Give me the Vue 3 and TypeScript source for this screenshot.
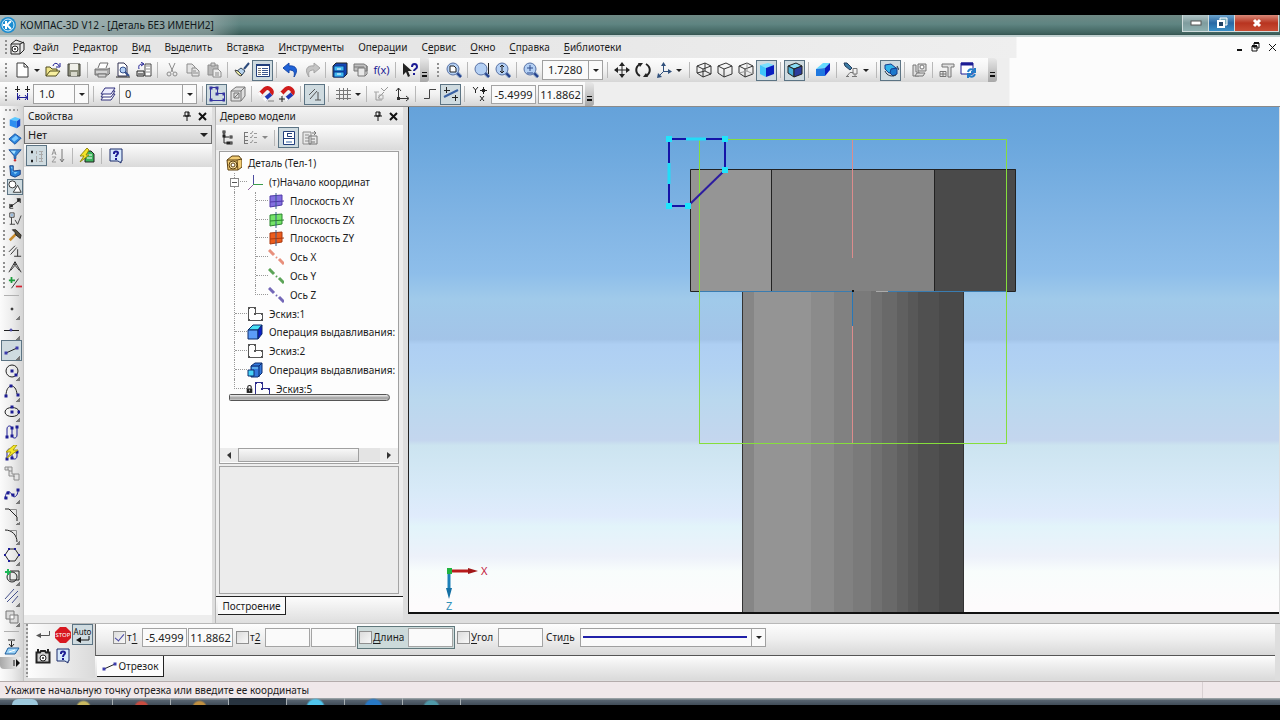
<script setup lang="ts">
import { h, ref } from 'vue'

type Shape = [d: string, fill: string, stroke?: string, width?: number]

const K = '#222'
const N = '#1c1c94'
const B = '#1f78e0'
const C = '#3fc4fa'
const D = '#0a1fc0'
const G = '#8c8c8c'
const L = '#d4d4d4'
const W = '#ffffff'
const _ = 'none'

const dots = (pts: number[][], s = 3): string =>
  pts.map(([x, y]) => `M${x - s / 2} ${y - s / 2}h${s}v${s}h${-s}z`).join('')
const ring = (x: number, y: number, r: number): string =>
  `M${x - r} ${y}a${r} ${r} 0 1 0 ${2 * r} 0a${r} ${r} 0 1 0 ${-2 * r} 0z`

const lens: Shape[] = [
  ['M11 11L15 15', _, '#8fa8c8', 4],
  ['M11 11L15 15', _, '#24408c', 2],
  [ring(7, 7, 6), '#b4d0f4', '#5670a4', 1],
]
const sketch = (c: string, s: number): Shape[] => [
  ['M1.5 1.5H8.500V7.500H15.500V14.500H1.500z', _, c, 1],
  [dots([[2, 2], [8, 2], [8, 8], [15, 8], [15, 14], [2, 14]], s), c],
]
const cubeWire: Shape = ['M1 4L9 1L15 4V12L7 15L1 11zM1 4L7 7L15 4M7 7V15', _, '#333', 1]
const magnet: Shape[] = [
  ['M2 8L7 3C10 0 16 5 13 8', _, '#d01c1c', 4],
  ['M13 8L7 13', _, '#2038b4', 4],
  ['M1 9L3 7M6 14L8 12', _, '#fafafa', 4],
]
const plane = (c: string, e: string): Shape[] => [
  ['M2 3L14 2V12L2 14z', c, e, 1],
  ['M8 0V16', _, '#345a8a', 1],
  ['M2 9L16 8', _, e, 1],
]
const axis = (c: string): Shape[] => [
  ['M1 1L6 6M11 10L16 15', _, c, 3],
  ['M8 8L9 9', _, c, 2],
]
const helpBox: Shape[] = [
  ['M2 1H14V13H13V15L10 13H2z', '#d6e8fb', '#1a2a6a', 1],
  ['M6 6V5C6 3 10 3 10 5C10 7 8 6 8 9', _, N, 2],
  ['M7 10H9V12H7z', N],
]

const icons: Record<string, Shape[]> = {
  detail: [['M2 5L7 1L15 4V11L11 15H2z', '#e8e8e8', K, 1], ['M2 5H11V15M11 5L15 3', _, K, 1], [ring(6, 10, 3), W, K, 1], [ring(6, 10, 1), K]],
  fresh: [['M3 1H10L14 5V15H3z', W, '#3c3c3c', 1], ['M10 1V5H14', _, '#3c3c3c', 1]],
  open: [['M1 14V5H5L7 7H12V9', '#efe58a', '#4f4a1c', 1], ['M1 14L5 9H15L11 14z', '#f8f0a0', '#4f4a1c', 1], ['M8 4C9 0 13 1 14 4M15 1V5H11', _, N, 1]],
  save: [['M2 2H14V14H2z', '#8c8e7c', '#404038', 1], ['M4 2H12V8H4z', '#f0f0ea'], ['M5 10H11V14H5z', '#d8d8cc']],
  print: [['M4 6L6 1H14L12 6', W, '#707070', 1], ['M1 7H14L16 6V11L14 13H1z', '#a8a8a8', '#707070', 1], ['M2 10H13', _, W, 1], ['M4 12H12V15H4z', L, '#707070', 1]],
  preview: [['M3 1H9L12 4V14H3z', W, '#303050', 1], [ring(8, 8, 3), '#b4d0f4', '#34508c', 1], ['M10 10L14 14', _, '#34508c', 2], ['M1 15H15', _, K, 1]],
  manager: [['M9 2H15V14H9z', W, '#444', 1], ['M10 4H14M10 7H14M10 10H14', _, G, 1], ['M1 9H8V14H1z', '#e8e8e8', K, 1], ['M2 12H7', _, K, 1], ['M3 7C2 3 4 2 7 2M5 0L8 2L5 4', _, N, 1]],
  cut: [['M5 1L9 10M11 1L7 10', _, G, 1], [ring(5, 12, 2), _, G, 1], [ring(11, 12, 2), _, G, 1]],
  copy: [['M2 2H7L10 5V11H2z', '#e4e4e4', G, 1], ['M7 6H11L14 9V14H7z', '#e4e4e4', G, 1], ['M8 9H11M8 11H13', _, G, 1]],
  paste: [['M2 3H12V13H2z', '#b8b8b8', G, 1], ['M5 1H9V4H5z', L, G, 1], ['M7 7H12L15 10V15H7z', '#ececec', G, 1], ['M9 11H13M9 13H13', _, G, 1]],
  brush: [['M15 1L10 7', _, '#2c4a7c', 2], ['M7 6L11 9L8 13L3 9z', '#b8d4ee', '#33475e', 1], ['M1 8L4 9L8 13L7 14C4 13 2 11 1 8z', '#eef0a8', '#444', 1]],
  propsheet: [['M1.500 2.500H14.500V14.500H1.500z', W, '#223f7c', 1], ['M1 3H15', _, '#223f7c', 2], ['M3 6.500H6M3 8.500H6M3 10.500H6M3 12.500H6', _, '#777', 1], ['M7 6.500H13M7 8.500H13M7 10.500H13M7 12.500H13', _, '#3c5890', 1]],
  undo: [['M0 6L6 1V4C13 3 16 8 11 15C12 10 11 8 6 8V11z', '#1e62d8', '#1848a8', 1]],
  redo: [['M16 6L10 1V4C3 3 0 8 5 15C4 10 5 8 10 8V11z', '#c4c4c4', '#a4a4a4', 1]],
  cabinet: [['M1 4L4 1H15V12L12 15H1z', '#1446b4', K, 1], ['M2 4H12V9H2zM2 10H12V15H2z', '#40b8f0', '#0a3a90', 1], ['M5 7H9M5 12H9', _, W, 1]],
  library: [['M1 2H11L14 4V9H1z', '#c0c0c0', '#777', 1], ['M5 6H12V14H5z', '#e8e8e8', '#777', 1], ['M1 5H11M12 14L14 12V4', _, '#777', 1]],
  ask: [['M1 1V13L4 10L6 15L8 14L6 9H10z', K], ['M10 5C10 1 15 1 15 5C15 7 12 7 12 9M12 11V13', _, N, 2]],
  zoompage: [...lens, ['M4 4H8L10 6V10H4z', W, K, 1]],
  zoomframe: [...lens, ['M14.500 1V12', _, K, 1]],
  zoomone: [...lens, ['M7 3V11M5 5L7 3L9 5M5 9L7 11L9 9', _, K, 1]],
  zoomscale: [...lens, ['M4 6H10M7 3V9M4 11H10', _, '#2c4a8c', 1]],
  pan: [['M8 1V15M1 8H15', _, K, 1], ['M8 0L11 4H5zM8 16L11 12H5zM0 8L4 5V11zM16 8L12 5V11z', K]],
  rotate: [['M5 14C0 11 0 5 5 2M11 2C16 5 16 11 11 14', _, K, 2], ['M3 1H8L5 5zM13 15H8L11 11z', K]],
  orient: [['M7.500 3V9.500L3 14M7 9.500H13', _, '#30507c', 1], ['M7.500 0L10 4H5zM16 9.500L12 7V12zM1 16L2 11L6 15z', '#30507c']],
  wire: [cubeWire, ['M9 1V9L1 11M9 9L15 12', _, '#333', 1]],
  hidden: [cubeWire],
  thin: [cubeWire, ['M9 1V9L1 11M9 9L15 12', _, '#999', 1]],
  shaded: [['M1 3L9 1L15 3L7 6z', '#7ae0ff'], ['M1 3L7 6V15L1 12z', C], ['M7 6L15 3V12L7 15z', D]],
  shadededge: [['M1 4L9 1L15 4L7 7z', '#8adcf4', K, 1], ['M1 4L7 7V15L1 11z', '#48b0d8', K, 1], ['M7 7L15 4V12L7 15z', '#2a3c9c', K, 1]],
  perspective: [['M1 7L8 1H15L10 6z', '#66dcff'], ['M1 7L10 6V14L1 14z', B], ['M10 6L15 1V8L10 14z', D]],
  section: [['M1 1L4 1L9 6L7 8L2 4z', '#3c7ca4', '#243c5c', 1], ['M4 14L7 10.500H10V6.500H14V12H10V10M3 14.500H6M9 14.500H14M12 12V15', _, '#777', 1]],
  rebuild: [['M2 3L8 2L13 6L12 10L6 11L2 7z', '#30b4ec', '#143c8c', 1], ['M8 7L14 6L14 12L10 14L7 11z', '#1c78cc', '#143c8c', 1], ['M2 9C4 14 9 15 13 13M14 4L16 8', _, '#234', 1]],
  assembly: [['M2 3H5V10H8V14H2z', '#dedede', '#777', 1], ['M7 2H15V9H7zM4 14L6 11H14L12 14z', '#dedede', '#777', 1], [ring(11, 5, 2), W, '#777', 1]],
  layout: [['M3 2H15V5H12V15H9V5H3z', '#e0e0e0', '#777', 1], ['M1 9.500H7V14.500H1zM1 12H7M4 9V15', _, '#777', 1]],
  windows: [['M1 1H13V12H1z', W, N, 1], ['M1 2H13', _, N, 3], ['M8 10C9 6 13 7 14 9M15 6V10H11M15 12C13 16 10 15 9 13M8 16V12H12', _, '#267cc8', 2]],
  step: [['M3.500 14V7M13.500 14V7M3 11.500H13M6 9L4 11.500L6 14M11 9L13 11.500L11 14', _, N, 1], ['M3.500 0V6M1 3.500H6M13.500 0V6M11 3.500H16', _, K, 1]],
  layers: [['M5 8H15L11 14H1z', W, '#30307c', 1], ['M5 5H15L11 11H1z', W, '#30307c', 1], ['M5 2H15L11 8H1z', '#eef', '#30307c', 1]],
  sketch: sketch('#3434a0', 3),
  sketchtree: sketch('#555', 2),
  sketchnavy: sketch('#2c2c8c', 2),
  face: [['M1 5L6 1H15V10L11 15H1z', '#dedede', '#777', 1], ['M1 5H11V15M11 5L15 1M4 12L9 7', _, '#777', 1], ['M4 7H9V12H4z', _, '#777', 1]],
  magnet: [...magnet, [dots([[11, 15], [13, 15], [15, 15]], 1), K]],
  magnetadd: [...magnet, ['M3 10V16M0 13H6', _, K, 1]],
  ortho: [['M2 9L8 3M3 13L10 5M11 6V14M8 14H14', _, '#555', 1]],
  grid: [['M4.500 2V14M8.500 2V14M12.500 2V14M1 4.500H16M1 8.500H16M1 12.500H16', _, '#777', 1]],
  lcs: [['M3 6V14H9M5 12L11 6M8 2L11 5L15 1', _, '#999', 1], ['M1 6H6M6 9H10V13H6z', _, '#aaa', 1]],
  axes: [['M4.500 2V12.500H14M2 5L4.500 2L7 5M12 10L15 12.500L12 15', _, '#333', 1], [dots([[4.500, 12.500]], 3), '#333']],
  polyline: [['M2 12.500H7.500V3.500H14', _, '#444', 1]],
  snaps: [['M1 11L15 4', _, '#3a62a4', 2], ['M3.500 1V7M1 4.500H7M12.500 9V15M9 11.500H15', _, K, 1]],
  xy: [['M1 1L3.500 4L6 1M3.500 4V7M8 10L12 15M12 10L8 15', _, K, 1], ['M11.500 1V8M8 4.500H15', _, K, 1], [dots([[11.500, 4.500]], 3), K]],
  part: [['M2 4L8 1L14 3L10 6z', '#5cc8ff'], ['M2 4L10 6V14L2 11z', '#2f8ff0'], ['M10 6L14 3V11L10 14z', '#1850d0']],
  surface: [['M1 8L8 2L15 7L8 14z', '#2c84dc', '#1450a0', 1], ['M4 8L9 4L12 7L7 11z', '#7ac8ff']],
  filter: [['M1 2H15L9 9V12H7V9z', '#3488d8', '#1c4c94', 1], ['M3 3H9L7 7z', '#a4e0ff'], [ring(8, 14, 1), '#d02020', '#d02020', 1]],
  sheet: [['M2 2H6V8L14 7V12L8 15L3 13z', '#2880d8', '#12387c', 1], ['M3 3H5V9L11 9L8 12z', '#7cc8f8']],
  geometry: [[ring(5, 5, 4), W, K, 1], ['M11 6L15 14H6z', W, K, 1]],
  dimension: [['M2 13L14 4M2 9V14H6M10 3H14V8', _, K, 1], [dots([[4, 11], [12, 5]], 3), K]],
  marks: [['M2 1H7V6H2zM4 6V14M2 14H8M8 9L11 14L15 4', _, '#333', 1], ['M3 2H6V5H3z', '#9bd']],
  hammer: [['M2 14L9 7', _, '#c88c2c', 3], ['M5 2L9 2L15 8L14 12L9 8L8 5z', '#57503c', '#222', 1]],
  params: [['M1 9L8 2M3 12L10 4M11 6V14M7 14H15', _, K, 1]],
  measure: [['M1 14L8 2L15 14M3 12L8 6L13 12M6 5H10', _, K, 1], [ring(8, 3, 1), K]],
  plusminus: [['M4 1V8M1 5H8', _, '#1c9c3c', 2], ['M4 14L12 3', _, K, 1], ['M9 12H16', _, '#d42030', 2]],
  point: [[ring(8, 8, 1), '#333', '#333', 1]],
  auxline: [['M0 8.500H15', _, K, 1], [ring(7, 8, 1), W, N, 1]],
  segment: [['M2 11L13 6', _, K, 1], [dots([[2, 11], [13, 6]], 3), '#3c3cac']],
  circle: [[ring(8, 8, 6), _, K, 1], [dots([[8, 8], [12, 12]], 3), N]],
  arc: [['M2 13C2 0 12 0 13 11', _, K, 1], [dots([[2, 13], [7, 3], [14, 12]], 3), N]],
  ellipse: [['M1 8C1 2 15 2 15 8C15 14 1 14 1 8z', _, K, 1], [dots([[8, 8], [8, 3], [15, 8]], 3), N]],
  spline: [['M3 13V5C3 1 8 1 8 5V11C8 15 13 15 13 11V3', _, N, 1], [dots([[3, 13], [8, 12], [8, 4], [13, 3]], 3), N]],
  autospline: [['M3 14V7C3 3 8 3 8 7V11C8 15 13 15 13 11V6', _, N, 1], [dots([[3, 14], [8, 13], [13, 7]], 3), N], ['M10 0L2 7H7L3 13L14 5H9L13 0z', '#f6e828', '#a89c10', 1]],
  offset: [['M1 2H8V9H15V15H10V11H5V5H1z', '#e4e4e4', G, 1], ['M4 2V5M8 6H5M10 9V12', _, G, 1]],
  bezier: [['M1 13C2 2 7 6 8 9C10 13 14 10 14 4', _, N, 1], [dots([[2, 12], [4, 7], [9, 9], [14, 4]], 3), N]],
  chamfer: [['M1 3H5L13 11V15', _, K, 1], ['M6 3.500H12.500V10', _, G, 1]],
  fillet: [['M1 3C8 3 13 8 13 15', _, K, 1], ['M6 3.500H12.500V10', _, G, 1]],
  polygon: [['M5 2H11L15 8L11 14H5L1 8z', _, K, 1], [dots([[5, 2], [11, 2], [15, 8], [5, 14], [1, 8]], 2), N]],
  project: [['M6 3H15V12H6z', _, K, 1], [ring(8, 9, 5), _, K, 1], ['M4 1V7M1 4H7', _, '#20b858', 2]],
  hatch: [['M1 11L10 1M3 14L14 3M8 15L14 8', _, '#44508c', 1]],
  equid: [['M2 2H10V6H14V14H6V10H2z', '#dcdcdc', '#777', 1], ['M6 6H10V10H6z', W, '#888', 1]],
  normal: [['M4 1H11M7.500 2V8M5 5L7.500 8L10 5', _, K, 1], ['M4 9H15L11 15H1z', '#9cd4f8', '#1c5c9c', 1], ['M5 13L11 11', _, W, 1]],
  cats: [[dots([[3, 3], [3, 5], [3, 12], [3, 14]], 1), K], ['M2 4H4M2 13H4', _, K, 2], ['M7.500 3V6M10 3.500H14M10 6.500H14M7.500 8V14M10 10.500H14M10 13.500H14M12.500 4V14', _, '#aaa', 1]],
  sort: [['M2 7L4 1L6 7M3 5H6M2 9H6L2 14H6', _, '#999', 1], ['M12 1V14M10 11L12 14L14 11', _, '#777', 1]],
  apply: [['M6 3H12L15 6V14H6z', '#3cb45c', K, 1], ['M8 7H13M8 10H13', _, W, 1], ['M8 0L1 8H5L1 14L10 7H7L10 2z', '#f4e428', '#948a10', 1]],
  help: helpBox,
  treeview: [['M3 2V13H10M3 7H8', _, K, 1], [dots([[3, 2], [3, 6], [10, 7], [10, 13], [7, 13]], 3), K], [dots([[3, 2], [10, 7], [10, 13]], 1), W]],
  treelist: [['M2.500 2V14M2 2.500H6M2 6.500H6M2 10.500H6M2 13.500H6', _, '#777', 1], ['M8 3L9 4L11 1M8 7L9 8L11 5M8 12L9 13L11 10M12 3.500H15M12 7.500H15M12 12.500H15', _, '#999', 1]],
  treedoc: [['M2.500 1.500H13.500V14.500H2.500z', W, '#223f7c', 1], ['M2 8.500H13M6.500 3V6.500H11M6 3.500H11', _, '#223f7c', 1], ['M5 11H11V13H5z', '#9cb4d4']],
  treerel: [['M1 2H9V14H1z', '#e8e8e8', G, 1], ['M3 5H7M3 8H7M3 11H7', _, G, 1], ['M7 6H15V14H7zM9 9H13M9 12H13M10 3H14L12 1M14 3L12 5', _, '#777', 1]],
  rootpart: [['M1 5L6 1H13L16 5V12L12 15H2z', '#f2cc74', '#5c4010', 1], ['M1 5H11L16 4M11 5L12 15', _, '#5c4010', 1], [ring(7, 10, 4), '#fbe6a8', '#5c4010', 1], [ring(7, 10, 2), '#fff', '#5c4010', 1]],
  origin: [['M6.500 1V11', _, '#4c4ca0', 1], ['M6 10.500H16', _, '#3c9c4c', 1], ['M6 11L1 16', _, '#9060a0', 1]],
  planexy: plane('#8270e0', '#5038a8'),
  planezx: plane('#74e468', '#2c8430'),
  planezy: plane('#ec5c1c', '#a83810'),
  axisx: axis('#e8907c'),
  axisy: axis('#5ca458'),
  axisz: axis('#7468b8'),
  extrude: [['M1 6L6 1H15L11 6z', '#48e0f4', '#0c2c6c', 1], ['M1 6H11V15H1z', '#5c9cf8', '#0c2c6c', 1], ['M11 6L15 1V10L11 15z', '#0c20c8', '#0c2c6c', 1]],
  extrude2: [['M4 4L8 1H15V11L11 15H4z', '#3478dc', '#0c2c6c', 1], ['M4 4H12L15 1M12 4V15', _, '#0c2c6c', 1], ['M5 6H11', _, '#80dcf8', 1], ['M1 8H7V14H1z', '#48d4f8', '#0c2c6c', 1]],
  lock: [['M5 7V4C5 1 11 1 11 4V7', _, K, 2], ['M3 7H13V15H3z', K], ['M8 9V12', _, '#aaa', 2]],
  enter: [['M14.500 4V8.500H3', _, '#555', 1], ['M1 8.500L6 6V11z', '#555']],
  camera: [['M1.500 4.500H5L6 3H10L11 4.500H14.500V14.500H1.500z', '#d0d0d0', K, 2], [ring(8, 10, 3), W, K, 1], [ring(8, 10, 1), K], ['M3 4V1M13 4V1', _, K, 2]],
}

const Ico = (p: { n: string }) =>
  h(
    'svg',
    { class: 'ico', viewBox: '0 0 16 16', width: 16, height: 16, 'aria-hidden': 'true' },
    icons[p.n].map(([d, fill, stroke, width]) =>
      h('path', { d, fill, stroke: stroke ?? 'none', 'stroke-width': width ?? 1 }),
    ),
  )

interface Tool { n: string; t: string; on?: boolean; drop?: boolean }
type Item = Tool | '|'

const menu: [string, string, string][] = [
  ['', 'Ф', 'айл'], ['', 'Р', 'едактор'], ['', 'В', 'ид'], ['В', 'ы', 'делить'], ['Вст', 'а', 'вка'],
  ['', 'И', 'нструменты'], ['Опера', 'ц', 'ии'], ['С', 'е', 'рвис'], ['', 'О', 'кно'], ['', 'С', 'правка'], ['', 'Б', 'иблиотеки'],
]

const standard: Item[] = [
  { n: 'fresh', t: 'Создать', drop: true }, { n: 'open', t: 'Открыть' }, { n: 'save', t: 'Сохранить' }, '|',
  { n: 'print', t: 'Печать' }, { n: 'preview', t: 'Предварительный просмотр' }, { n: 'manager', t: 'Менеджер библиотек' }, '|',
  { n: 'cut', t: 'Вырезать' }, { n: 'copy', t: 'Копировать' }, { n: 'paste', t: 'Вставить' }, '|',
  { n: 'brush', t: 'Копировать свойства' }, { n: 'propsheet', t: 'Свойства', on: true }, '|',
  { n: 'undo', t: 'Отменить' }, { n: 'redo', t: 'Повторить' }, '|',
  { n: 'cabinet', t: 'Библиотеки' }, { n: 'library', t: 'Каталог' },
]
const zooms: Item[] = [
  { n: 'zoompage', t: 'Показать все' }, '|', { n: 'zoomframe', t: 'Увеличить рамкой' }, { n: 'zoomone', t: 'Приблизить' }, '|',
  { n: 'zoomscale', t: 'Масштаб' },
]
const views: Item[] = [
  '|', { n: 'pan', t: 'Сдвинуть' }, { n: 'rotate', t: 'Повернуть' }, { n: 'orient', t: 'Ориентация', drop: true }, '|',
  { n: 'wire', t: 'Каркас' }, { n: 'hidden', t: 'Без невидимых линий' }, { n: 'thin', t: 'Невидимые линии тонкие' },
  { n: 'shaded', t: 'Полутоновое', on: true }, '|', { n: 'shadededge', t: 'Полутоновое с каркасом', on: true }, '|',
  { n: 'perspective', t: 'Перспектива' }, '|', { n: 'section', t: 'Сечение', drop: true }, '|',
  { n: 'rebuild', t: 'Перестроить', on: true }, '|', { n: 'assembly', t: 'Сборка' }, '|',
  { n: 'layout', t: 'Разнести' }, { n: 'windows', t: 'Обновить' },
]
const modes: Item[] = [
  '|', { n: 'sketch', t: 'Эскиз', on: true }, { n: 'face', t: 'Грань' }, '|', { n: 'magnet', t: 'Привязки' }, { n: 'magnetadd', t: 'Запретить привязки' }, '|',
  { n: 'ortho', t: 'Параметрический режим', on: true }, '|', { n: 'grid', t: 'Сетка', drop: true }, '|',
  { n: 'lcs', t: 'Локальная СК' }, { n: 'axes', t: 'Оси' }, '|', { n: 'polyline', t: 'Ортогональное черчение' }, { n: 'snaps', t: 'Округление', on: true }, '|',
]

const sections: Tool[] = [
  { n: 'part', t: 'Деталь' }, { n: 'surface', t: 'Поверхности' }, { n: 'filter', t: 'Фильтры' }, { n: 'sheet', t: 'Листовое тело' },
  { n: 'geometry', t: 'Геометрия', on: true }, { n: 'dimension', t: 'Размеры' }, { n: 'marks', t: 'Обозначения' }, { n: 'hammer', t: 'Редактирование' },
  { n: 'params', t: 'Параметризация' }, { n: 'measure', t: 'Измерения' }, { n: 'plusminus', t: 'Выделение' },
]
const drawing: Tool[] = [
  { n: 'point', t: 'Точка', drop: true }, { n: 'auxline', t: 'Вспомогательная прямая', drop: true }, { n: 'segment', t: 'Отрезок', on: true, drop: true },
  { n: 'circle', t: 'Окружность', drop: true }, { n: 'arc', t: 'Дуга', drop: true }, { n: 'ellipse', t: 'Эллипс', drop: true },
  { n: 'spline', t: 'Непрерывный ввод' }, { n: 'autospline', t: 'Автолиния' }, { n: 'offset', t: 'Мультилиния' }, { n: 'bezier', t: 'Кривая Безье', drop: true },
  { n: 'chamfer', t: 'Фаска', drop: true }, { n: 'fillet', t: 'Скругление', drop: true }, { n: 'polygon', t: 'Многоугольник', drop: true },
  { n: 'project', t: 'Спроецировать', drop: true }, { n: 'hatch', t: 'Штриховка', drop: true }, { n: 'equid', t: 'Эквидистанта', drop: true },
]

interface Node { n: string; t: string; level: number; last?: boolean; open?: boolean; lock?: boolean }
const tree: Node[] = [
  { n: 'rootpart', t: 'Деталь (Тел-1)', level: 0 },
  { n: 'origin', t: '(т)Начало координат', level: 1, open: true },
  { n: 'planexy', t: 'Плоскость XY', level: 2 },
  { n: 'planezx', t: 'Плоскость ZX', level: 2 },
  { n: 'planezy', t: 'Плоскость ZY', level: 2 },
  { n: 'axisx', t: 'Ось X', level: 2 },
  { n: 'axisy', t: 'Ось Y', level: 2 },
  { n: 'axisz', t: 'Ось Z', level: 2, last: true },
  { n: 'sketchtree', t: 'Эскиз:1', level: 1 },
  { n: 'extrude', t: 'Операция выдавливания:', level: 1 },
  { n: 'sketchtree', t: 'Эскиз:2', level: 1 },
  { n: 'extrude2', t: 'Операция выдавливания:', level: 1 },
  { n: 'sketchnavy', t: 'Эскиз:5', level: 1, last: true, lock: true },
]

const shaft: [number, number, string][] = [
  [742, 12, '#868686'], [754, 57, '#949494'], [811, 23, '#8b8b8b'], [834, 19, '#818181'], [853, 18, '#7a7a7a'],
  [871, 11, '#717171'], [882, 15, '#696969'], [897, 11, '#606060'], [908, 10, '#585858'], [918, 21, '#505050'], [939, 25, '#494949'],
]
const nodes = [[669, 139], [725, 139], [725, 170], [669, 206], [688, 206]]

const x1 = ref('-5.4999')
const y1 = ref('11.8862')
const useP1 = ref(true)
</script>

<template>
  <div class="screen">
    <div class="letterbox"></div>
    <header class="titlebar">
      <svg class="logo" viewBox="0 0 16 16" width="16" height="16" aria-hidden="true">
        <circle cx="8" cy="8" r="8" fill="#1a8cd0" />
        <circle cx="8" cy="8" r="6" fill="none" stroke="#d8f0fc" />
        <path d="M6 4V12M11 4L7 8L11 12M3 8H6" stroke="#fff" stroke-width="2" fill="none" />
      </svg>
      <h1>КОМПАС-3D V12 - [Деталь БЕЗ ИМЕНИ2]</h1>
      <div class="winbtns">
        <button class="min" aria-label="Свернуть"><svg width="12" height="6"><rect x="1" y="1" width="10" height="4" fill="#fff" stroke="#555" /></svg></button>
        <button class="max" aria-label="Восстановить"><svg width="12" height="12"><path d="M4 1H11V8H4z" fill="#7ab" stroke="#fff" /><path d="M2 4H8V10H2z" fill="#246" stroke="#fff" stroke-width="2" /></svg></button>
        <button class="close" aria-label="Закрыть"><svg width="12" height="10"><path d="M3 2L9 8M9 2L3 8" stroke="#fff" stroke-width="3" /></svg></button>
      </div>
    </header>

    <nav class="menubar">
      <i class="grip"></i>
      <Ico n="detail" />
      <div class="menus">
        <button v-for="m in menu" :key="m[2]">{{ m[0] }}<u>{{ m[1] }}</u>{{ m[2] }}</button>
      </div>
      <div class="docbtns">
        <button aria-label="Свернуть документ"><svg width="8" height="10"><path d="M1 8H6" stroke="#111" stroke-width="2" /></svg></button>
        <button aria-label="Восстановить документ"><svg width="10" height="10"><path d="M3 1H8V6H3zM1 4H6V9H1z" fill="#fff" stroke="#111" /><path d="M3 1H8M1 4H6" stroke="#111" stroke-width="2" /></svg></button>
        <button aria-label="Закрыть документ"><svg width="9" height="9"><path d="M1 1L8 8M8 1L1 8" stroke="#111" /></svg></button>
      </div>
    </nav>

    <div class="toolrow">
      <div class="toolbar">
        <i class="grip"></i>
        <template v-for="(b, i) in standard" :key="i">
          <i v-if="b === '|'" class="sep"></i>
          <template v-else>
            <button class="tool" :class="{ on: b.on }" :aria-label="b.t"><Ico :n="b.n" /></button>
            <button v-if="b.drop" class="drop" :aria-label="b.t + ': список'"></button>
          </template>
        </template>
        <button class="tool fx" aria-label="Переменные">f(x)</button>
        <i class="sep"></i>
        <button class="tool" aria-label="Что это?"><Ico n="ask" /></button>
        <button class="more" aria-label="Ещё"></button>
      </div>
      <div class="toolbar second">
        <i class="grip"></i>
        <template v-for="(b, i) in zooms" :key="i">
          <i v-if="b === '|'" class="sep"></i>
          <button v-else class="tool" :class="{ on: b.on }" :aria-label="b.t"><Ico :n="b.n" /></button>
        </template>
        <span class="combo scale">
          <select aria-label="Текущий масштаб"><option>1.7280</option></select><i></i>
        </span>
        <template v-for="(b, i) in views" :key="i">
          <i v-if="b === '|'" class="sep"></i>
          <template v-else>
            <button class="tool" :class="{ on: b.on }" :aria-label="b.t"><Ico :n="b.n" /></button>
            <button v-if="b.drop" class="drop" :aria-label="b.t + ': список'"></button>
          </template>
        </template>
        <button class="more last" aria-label="Ещё"></button>
      </div>
    </div>

    <div class="toolrow">
      <div class="toolbar">
        <i class="grip"></i>
        <button class="tool" aria-label="Шаг курсора"><Ico n="step" /></button>
        <span class="combo stepbox"><select aria-label="Шаг курсора"><option>1.0</option></select><i></i></span>
        <i class="sep"></i>
        <button class="tool" aria-label="Слои"><Ico n="layers" /></button>
        <span class="combo layerbox"><select aria-label="Слой"><option>0</option></select><i></i></span>
        <template v-for="(b, i) in modes" :key="i">
          <i v-if="b === '|'" class="sep"></i>
          <template v-else>
            <button class="tool" :class="{ on: b.on }" :aria-label="b.t"><Ico :n="b.n" /></button>
            <button v-if="b.drop" class="drop" :aria-label="b.t + ': список'"></button>
          </template>
        </template>
        <span class="tool xy"><Ico n="xy" /></span>
        <input v-model="x1" class="num" aria-label="Координата X" />
        <input v-model="y1" class="num" aria-label="Координата Y" />
        <button class="more" aria-label="Ещё"></button>
      </div>
    </div>

    <div class="body">
      <aside class="palette">
        <i class="hgrip"></i>
        <div v-for="s in sections" :key="s.n" class="section">
          <i class="grip"></i><button :class="{ on: s.on }" :aria-label="s.t"><Ico :n="s.n" /></button>
        </div>
        <i class="rule"></i>
        <div class="drawing">
          <button v-for="d in drawing" :key="d.n" :class="{ on: d.on, sub: d.drop }" :aria-label="d.t"><Ico :n="d.n" /></button>
        </div>
        <i class="rule"></i>
        <button class="normal" aria-label="Нормально к"><Ico n="normal" /></button>
        <button class="paletteend" aria-label="Ещё"><svg width="8" height="8"><path d="M1 1V7" stroke="#111" /><path d="M3 0V8L7 4z" fill="#111" /></svg></button>
      </aside>

      <div class="content">
        <div class="work">
          <section class="panel props">
            <div class="phead">
              <h2>Свойства</h2>
              <button aria-label="Закрепить"><svg width="8" height="10"><path d="M2 1V5H6V1zM0 5H8M4 5V10" fill="none" stroke="#111" /><path d="M5 1V5" stroke="#111" /></svg></button>
              <button aria-label="Закрыть"><svg width="9" height="9"><path d="M1 1L8 8M8 1L1 8" stroke="#111" stroke-width="2" /></svg></button>
            </div>
            <span class="combo none"><select aria-label="Объект"><option>Нет</option></select><i></i></span>
            <div class="ptools">
              <button class="tool on" aria-label="По категориям"><Ico n="cats" /></button>
              <button class="tool" aria-label="По алфавиту"><Ico n="sort" /></button>
              <i class="sep"></i>
              <button class="tool" aria-label="Применить"><Ico n="apply" /></button>
              <i class="sep"></i>
              <button class="tool" aria-label="Справка"><Ico n="help" /></button>
            </div>
            <div class="blank"></div>
          </section>

          <section class="panel model">
            <div class="phead">
              <h2>Дерево модели</h2>
              <button aria-label="Закрепить"><svg width="8" height="10"><path d="M2 1V5H6V1zM0 5H8M4 5V10" fill="none" stroke="#111" /><path d="M5 1V5" stroke="#111" /></svg></button>
              <button aria-label="Закрыть"><svg width="9" height="9"><path d="M1 1L8 8M8 1L1 8" stroke="#111" stroke-width="2" /></svg></button>
            </div>
            <div class="ptools">
              <button class="tool" aria-label="Дерево"><Ico n="treeview" /></button>
              <button class="tool" aria-label="Состав"><Ico n="treelist" /></button>
              <button class="drop dim" aria-label="Состав: список"></button>
              <i class="sep"></i>
              <button class="tool on" aria-label="Раздел"><Ico n="treedoc" /></button>
              <button class="tool" aria-label="Отношения"><Ico n="treerel" /></button>
            </div>
            <div class="treebox">
              <ul>
                <li v-for="(t, i) in tree" :key="i">
                  <span v-if="t.level === 2" class="guide"></span>
                  <span v-if="t.level > 0" class="guide" :class="{ last: t.last }"><i></i></span>
                  <button v-if="t.open" class="fold" aria-label="Свернуть ветвь"></button>
                  <span v-if="t.lock" class="lock"><Ico n="lock" /></span>
                  <Ico :n="t.n" />
                  <span class="label">{{ t.t }}</span>
                </li>
              </ul>
              <div class="endbar"></div>
              <div class="scroll">
                <button aria-label="Влево"><svg width="4" height="7"><path d="M4 0V7L0 3z" fill="#333" /></svg></button>
                <div class="track"><div class="thumb"></div></div>
                <button aria-label="Вправо"><svg width="4" height="7"><path d="M0 0V7L4 3z" fill="#333" /></svg></button>
              </div>
            </div>
            <div class="relbox"></div>
            <div class="ptabs"><button>Построение</button></div>
          </section>

          <main class="viewport">
            <svg viewBox="409 107 870 505" preserveAspectRatio="xMidYMin slice" role="img" aria-label="Модель болта">
              <g shape-rendering="crispEdges">
                <rect v-for="s in shaft" :key="s[0]" :x="s[0]" y="291" :width="s[1]" height="330" :fill="s[2]" />
                <rect x="690" y="169" width="82" height="122" fill="#959595" />
                <rect x="772" y="169" width="162" height="122" fill="#828282" />
                <rect x="934" y="169" width="82" height="122" fill="#4a4a4a" />
              </g>
              <path d="M742.500 291V620M963.500 291V620" stroke="#333" />
              <path d="M743 291.500H690.500V169.500H1015.500V291.500H963M771.500 169V291M934.500 169V291" fill="none" stroke="#222" />
              <path d="M699 291.500H853M887 291.500H1007" stroke="#3a7cb0" />
              <path d="M876 291.500H888" stroke="#aaa" />
              <rect x="699.500" y="139.500" width="307" height="304" fill="none" stroke="#86de3c" />
              <path d="M852.500 140V258M852.500 326V443" stroke="#dc8c8c" />
              <path d="M852.500 292V326" stroke="#2878b8" />
              <rect x="852" y="290" width="2" height="2" fill="#111" />
              <path d="M669 139H725V170" fill="none" stroke="#1414a8" stroke-width="2" />
              <path d="M725 170L688 206" fill="none" stroke="#2c1ca0" stroke-width="2" />
              <path d="M688 206H669V139" fill="none" stroke="#1414a8" stroke-width="2" />
              <path d="M686 139H706M669 163V184" stroke="#22dcf8" stroke-width="3" />
              <rect v-for="(p, i) in nodes" :key="i" :x="p[0] - 3" :y="p[1] - 3" width="6" height="6" fill="#20e4fc" />
              <path d="M450 571H470" stroke="#b81c1c" stroke-width="3" /><path d="M468 568L478 571L468 574z" fill="#a01818" />
              <path d="M449 573V590" stroke="#1c80b8" stroke-width="3" /><path d="M446 588H452L449 599z" fill="#1470a4" />
              <rect x="447" y="568" width="5" height="6" fill="#20b440" />
              <text x="481" y="575" fill="#c42040">X</text>
              <text x="446" y="610" fill="#3090b8">Z</text>
            </svg>
          </main>
        </div>

        <section class="command">
          <i class="grip"></i>
          <div class="cbtns">
            <button class="tool" aria-label="Создать объект"><Ico n="enter" /></button>
            <button class="tool stop" aria-label="Прервать команду"><svg viewBox="0 0 16 16" width="16" height="16"><path d="M5 0H11L16 5V11L11 16H5L0 11V5z" fill="#d81820" /><text x="8" y="10" text-anchor="middle">STOP</text></svg></button>
            <button class="tool on auto" aria-label="Автосоздание">Auto<svg width="14" height="7"><path d="M13 0V4H3" fill="none" stroke="#111" /><path d="M0 4L5 1V7z" fill="#111" /></svg></button>
            <button class="tool" aria-label="Запомнить состояние"><Ico n="camera" /></button>
            <button class="tool" aria-label="Справка"><Ico n="help" /></button>
          </div>
          <div class="cmain">
            <div class="params">
              <label class="p1"><input v-model="useP1" type="checkbox" /><span>т<u>1</u></span></label>
              <input v-model="x1" class="num" aria-label="т1 X" />
              <input v-model="y1" class="num" aria-label="т1 Y" />
              <label class="p2"><input type="checkbox" /><span>т<u>2</u></span></label>
              <input class="num" aria-label="т2 X" />
              <input class="num" aria-label="т2 Y" />
              <div class="length">
                <label><input type="checkbox" /><span><u>Д</u>лина</span></label>
                <input class="num" aria-label="Длина" />
              </div>
              <label class="angle"><input type="checkbox" /><span><u>У</u>гол</span></label>
              <input class="num" aria-label="Угол" />
              <label class="stylelabel" for="linestyle">Сти<u>л</u>ь</label>
              <span class="combo linebox"><select id="linestyle"><option></option></select><b></b><i></i></span>
            </div>
            <div class="ctabs"><button><Ico n="segment" />Отрезок</button></div>
          </div>
        </section>
      </div>
    </div>

    <footer class="status"><span>Укажите начальную точку отрезка или введите ее координаты</span></footer>
    <div class="taskbar">
      <i class="orb"></i><i class="t yellow"></i><i class="t red"></i><i class="t orange"></i><i class="t active"></i><i class="t cyan"></i><i class="t blue"></i><i class="t teal"></i>
    </div>
    <div class="letterbox"></div>
  </div>
</template>

<style>
body { margin: 0; background: #000; }
</style>

<style scoped>
.screen {
  display: flex;
  flex-direction: column;
  height: 100vh;
  overflow: hidden;
  background: #dedede;
  color: #1c1c1c;
  font: 10px/16px "Noto Sans", "Open Sans", sans-serif;
}
.screen * { box-sizing: border-box; }
button, select, input {
  margin: 0;
  padding: 0;
  border: 0;
  border-radius: 0;
  background: none;
  color: inherit;
  font: inherit;
}
button { display: flex; align-items: center; justify-content: center; flex: none; }
svg { display: block; flex: none; }
u { text-decoration: underline; text-underline-offset: 2px; }
h1, h2 { margin: 0; font: inherit; }

.letterbox { height: 15px; flex: none; background: #000; }

.titlebar {
  display: flex;
  align-items: center;
  height: 20px;
  flex: none;
  background: linear-gradient(90deg, rgba(190, 200, 202, .75), rgba(160, 175, 175, .6) 210px, transparent 240px), linear-gradient(#6f8985, #5f8582 45%, #416460 90%, #345350);
  color: #10181a;
}
.logo { margin-right: 4px; }
.winbtns { display: flex; align-self: flex-start; margin-left: auto; margin-right: 1px; height: 17px; border: solid #d0dcdc; border-width: 0 1px 1px; }
.winbtns button { width: 26px; border-right: 1px solid #d0dcdc; background: linear-gradient(#b0c4c6, #7f9c9e 50%, #8fb0b0); align-items: center; }
.winbtns .max { background: linear-gradient(#6ca4cc, #2868a4 50%, #3a90c8); }
.winbtns .close { width: 43px; border: 0; background: linear-gradient(#d88878, #b83420 50%, #c84c34); }

.menubar {
  display: flex;
  align-items: center;
  height: 23px;
  flex: none;
  padding-bottom: 1px;
  border-top: 2px solid #c0d0d0;
  background: linear-gradient(90deg, #e6e6e6 450px, #efefef 1016px, #fcfcfc 1017px);
}
.grip { width: 2px; height: 14px; flex: none; margin: 0 4px 0 5px; background: repeating-linear-gradient(#909090 0 2px, transparent 2px 4px); }
.menubar .grip { margin-right: 2px; }
.menus { display: flex; margin-left: 1px; }
.menus button { padding: 0 7px; }
.docbtns { display: flex; align-items: center; gap: 7px; margin-left: auto; margin-right: 3px; }

.toolrow {
  display: flex;
  height: 24px;
  flex: none;
  background: linear-gradient(90deg, #eeeeee 1009px, #fcfcfc 1010px);
}
.toolbar {
  display: flex;
  align-items: center;
  background: linear-gradient(#fdfdfd, #f2f2f2 50%, #d6d6d6);
  border-radius: 0 3px 3px 0;
}
.second .grip { margin: 0 4px 0 8px; }
.second .drop { margin-right: 2px; }
.tool { display: flex; align-items: center; justify-content: center; width: 21px; height: 21px; flex: none; }
.on { background: #cfdbe0; border: 1px solid #5c7484; }
.sep { width: 1px; height: 16px; flex: none; margin: 0 3px; background: #b8b8b8; }
.fx { color: #1c1c94; font-size: 11px; }
.drop { width: 10px; height: 21px; }
.drop::before, .combo i::before {
  content: "";
  border: solid transparent;
  border-width: 3px 3px 0;
  border-top-color: #222;
}
.dim::before { border-top-color: #888; }
.more {
  align-self: stretch;
  align-items: flex-end;
  width: 9px;
  padding-bottom: 4px;
  background: linear-gradient(#e8e8e8, #a8a8a8);
  border-radius: 0 3px 3px 0;
}
.more::before { content: ""; width: 5px; height: 6px; background: linear-gradient(#111 1px, transparent 1px 3px, #111 3px 5px, transparent 5px); }
.more.last { margin-left: 10px; }
.combo { display: grid; flex: none; height: 20px; border: 1px solid #a0a0a0; background: #fafafa; }
.combo select { grid-area: 1 / 1; width: 100%; min-width: 0; padding-left: 5px; appearance: none; font-size: 11px; }
.combo i {
  grid-area: 1 / 1;
  justify-self: end;
  display: flex;
  align-items: center;
  justify-content: center;
  width: 14px;
  border-left: 1px solid #a0a0a0;
  pointer-events: none;
}
.scale { width: 61px; margin: 0 1px; }
.stepbox { width: 56px; margin: 0 1px; }
.layerbox { width: 78px; margin: 0 2px 0 1px; }
.xy { margin: 0 1px; }
.num { width: 45px; height: 19px; flex: none; border: 1px solid #a4a4a4; background: #fafafa; text-align: center; font-size: 11px; }
.toolbar .num { margin-right: 2px; }

.body { display: flex; flex: 1; min-height: 0; }
.palette {
  display: flex;
  flex-direction: column;
  width: 24px;
  flex: none;
  border-right: 1px solid #c4c4c4;
  background: linear-gradient(90deg, #fbfbfb, #ededed 50%, #d4d4d4);
}
.hgrip { height: 2px; flex: none; margin: 3px 5px 4px; background: repeating-linear-gradient(90deg, #999 0 2px, transparent 2px 4px); }
.section { display: flex; align-items: center; height: 16px; flex: none; }
.section .grip { margin: 0 2px 0 3px; height: 10px; }
.section button { width: 16px; height: 16px; }
.section svg { width: 14px; height: 14px; }
.rule { height: 1px; flex: none; margin: 4px 4px 3px; background: #b0b0b0; }
.drawing { display: flex; flex-direction: column; flex: 1; }
.drawing button { flex: 1 1 20px; width: 21px; margin-left: 1px; }
.drawing .sub::after {
  content: "";
  align-self: flex-end;
  flex: none;
  margin-left: -4px;
  width: 4px;
  height: 4px;
  background: linear-gradient(135deg, transparent 50%, #777 50%);
}
.normal { height: 20px; margin-top: 2px; }
.paletteend { justify-content: flex-end; width: 21px; height: 12px; margin-bottom: 12px; border-radius: 0 0 4px 4px; background: linear-gradient(90deg, #a8a8a8, #f0f0f0); }

.content { display: flex; flex-direction: column; flex: 1; min-width: 0; }
.work { display: flex; flex: 1; min-height: 0; border-top: 1px solid #8a8a8a; }
.panel { display: flex; flex-direction: column; flex: none; width: 188px; background: #ededed; }
.props { margin-right: 3px; }
.model { border-left: 1px solid #b4b4b4; margin-right: 5px; }
.phead { display: flex; align-items: center; height: 18px; flex: none; padding: 0 5px 0 4px; background: linear-gradient(#f4f4f4, #e2e2e2); }
.phead h2 { margin-right: auto; }
.phead button { margin-left: 7px; }
.none { height: 19px; border-color: #707070; background: linear-gradient(#ececec, #d4d4d4); }
.none select { padding-left: 3px; }
.none i { border: 0; }
.none i::before { border-width: 4px 4px 0; }
.ptools { display: flex; align-items: center; height: 23px; flex: none; padding-left: 2px; background: linear-gradient(#fcfcfc, #dadada); }
.ptools .sep { margin: 0 3px 0 4px; }
.model .ptools { height: 25px; }
.blank { flex: 1; background: #fcfcfc; }
.treebox { position: relative; display: flex; flex-direction: column; flex: none; height: 313px; margin: 1px 4px 0 3px; border: 1px solid #a0a0a0; background: #fdfdfd; overflow: hidden; }
.treebox ul { display: flex; flex-direction: column; height: 244px; margin: 2px 0 0; padding: 0 0 0 6px; list-style: none; flex: none; }
.treebox li { display: flex; align-items: center; flex: 1; position: relative; white-space: nowrap; }
.label { margin-left: 6px; }
.guide { width: 13px; margin-left: 8px; align-self: stretch; flex: none; border-left: 1px dotted #999; }
.guide i { display: block; height: 50%; border-bottom: 1px dotted #999; }
.guide.last { border-left: 0; }
.guide.last i { border-left: 1px dotted #999; }
.fold { position: absolute; left: 4px; top: 5px; width: 9px; height: 9px; border: 1px solid #888; background: linear-gradient(#555, #555) center / 5px 1px no-repeat #fff; }
.lock { width: 8px; margin-left: -2px; }
.lock svg { width: 9px; height: 14px; }
.lock + svg { margin-left: 1px; }
.endbar { height: 7px; flex: none; margin: -4px 8px 0 9px; border: 1px solid #555; border-radius: 2px 5px 5px 2px; background: linear-gradient(#f0f0f0, #a0a0a0 60%, #c8c8c8); position: relative; }
.scroll { display: flex; height: 14px; margin-top: auto; flex: none; margin-bottom: 1px; background: #e4e4e4; }
.scroll button { width: 18px; background: #ececec; }
.track { flex: 1; }
.thumb { width: 85%; height: 14px; border: 1px solid #a0a0a0; background: linear-gradient(#f8f8f8, #dcdcdc); }
.relbox { flex: 1; margin: 2px 4px 2px 3px; border: 1px solid #a4a4a4; background: #ececec; }
.ptabs { height: 27px; flex: none; border-top: 1px solid #222; background: linear-gradient(#fcfcfc, #dedede); }
.ptabs button { width: 68px; height: 18px; margin-left: 2px; border: solid #222; border-width: 0 1px 1px 0; background: #fafafa; }
.props .blank { margin-bottom: 8px; }

.viewport {
  flex: 1;
  min-width: 0;
  margin: 0 1px 9px 0;
  border-left: 1px solid #222;
  border-bottom: 2px solid #111;
  background: linear-gradient(#65a2da 0%, #6ba7dd 7%, #80b4e4 22%, #8ebeea 33%, #a0caea 38%, #a3c4e8 46%, #aecff3 47%, #b2d2f2 52%, #bad8ee 58%, #c4d6ee 66%, #cce4f0 67%, #d8eaf8 76%, #e0ebfc 81%, #e2f4fa 83%, #edf1fa 89%, #f8fdfc 92%, #fdfbfc 99%);
}
.viewport svg { width: 100%; height: 100%; font-size: 11px; }

.command { display: flex; flex: none; height: 58px; border-top: 1px solid #b8b8b8; }
.command .grip { height: auto; margin: 0 0 4px 2px; }
.cbtns { display: grid; grid-template-columns: 20px 20px 20px; grid-template-rows: 21px 21px; align-content: start; justify-content: end; width: 67px; padding-right: 3px; height: 54px; background: linear-gradient(90deg, #fdfdfd, #dadada); }
.stop text { fill: #fff; font-size: 6px; }
.auto { flex-direction: column; font-size: 8px; line-height: 9px; color: #111; }
.cmain { display: flex; flex-direction: column; flex: 1; margin-right: 5px; }
.params { display: flex; align-items: center; height: 32px; padding: 0 0 5px 17px; border-left: 1px solid #666; border-bottom: 1px solid #555; background: linear-gradient(#fdfdfd, #eeeeee 50%, #d8d8d8); }
.params label { display: flex; align-items: center; flex: none; }
.params .num { margin-left: 1px; }
.params input[type="checkbox"] { display: flex; justify-content: center; appearance: none; width: 13px; height: 13px; flex: none; border: 1px solid #909090; background: linear-gradient(135deg, #dcdcdc, #f8f8f8); }
.params input[type="checkbox"]:checked::before { content: ""; width: 8px; height: 4px; margin-top: 2px; border: solid #4444a4; border-width: 0 0 1px 1px; transform: rotate(-50deg); }
.params label span { margin-left: 1px; }
.p1 { width: 28px; }
.p2 { width: 28px; margin-left: 3px; }
.length { display: flex; align-items: center; height: 23px; margin-left: 1px; padding: 0 1px; border: 1px solid #60787c; background: #ccdada; }
.length label { width: 48px; }
.angle { width: 40px; margin-left: 2px; }
.params .stylelabel { width: 37px; padding-left: 3px; }
.linebox { width: 186px; height: 19px; }
.linebox b { grid-area: 1 / 1; align-self: center; height: 2px; margin: 0 18px 0 2px; background: #2020a8; pointer-events: none; }
.ctabs { display: flex; flex: 1; margin-bottom: 1px; background: linear-gradient(#fdfdfd, #ececec 45%, #dadada); }
.ctabs button { width: 67px; height: 21px; margin-left: 2px; gap: 1px; border: solid #222; border-width: 0 1px 1px 0; background: #fcfcfc; }

.status { display: flex; align-items: center; height: 17px; flex: none; padding: 0 77px 0 5px; border-top: 1px solid #b4acac; background: #f0e8ea; }
.status span { flex: 1; border-right: 1px solid #d8d0d2; }
.taskbar { display: flex; height: 7px; flex: none; padding-left: 12px; background: linear-gradient(#98a0a4 1px, #586470 2px, #404c58); }
.orb { width: 26px; margin-right: 17px; border-radius: 13px 13px 0 0; background: #9cc8dc; align-self: flex-end; height: 6px; }
.t { width: 58px; flex: none; border-right: 1px solid #a8b0b4; }
.active { background: #283440; }
.yellow { background: radial-gradient(circle at 50% 10px, #c8b860 6px, transparent 8px); }
.red { background: radial-gradient(circle at 50% 10px, #c84c40 6px, transparent 8px); }
.orange { background: radial-gradient(circle at 50% 10px, #c09040 6px, transparent 8px); }
.cyan { background: radial-gradient(circle at 50% 10px, #50c4ec 8px, transparent 10px); }
.blue { background: radial-gradient(circle at 50% 10px, #2878c4 8px, transparent 10px); }
.teal { background: radial-gradient(circle at 50% 10px, #5098a8 7px, transparent 9px); }
</style>
